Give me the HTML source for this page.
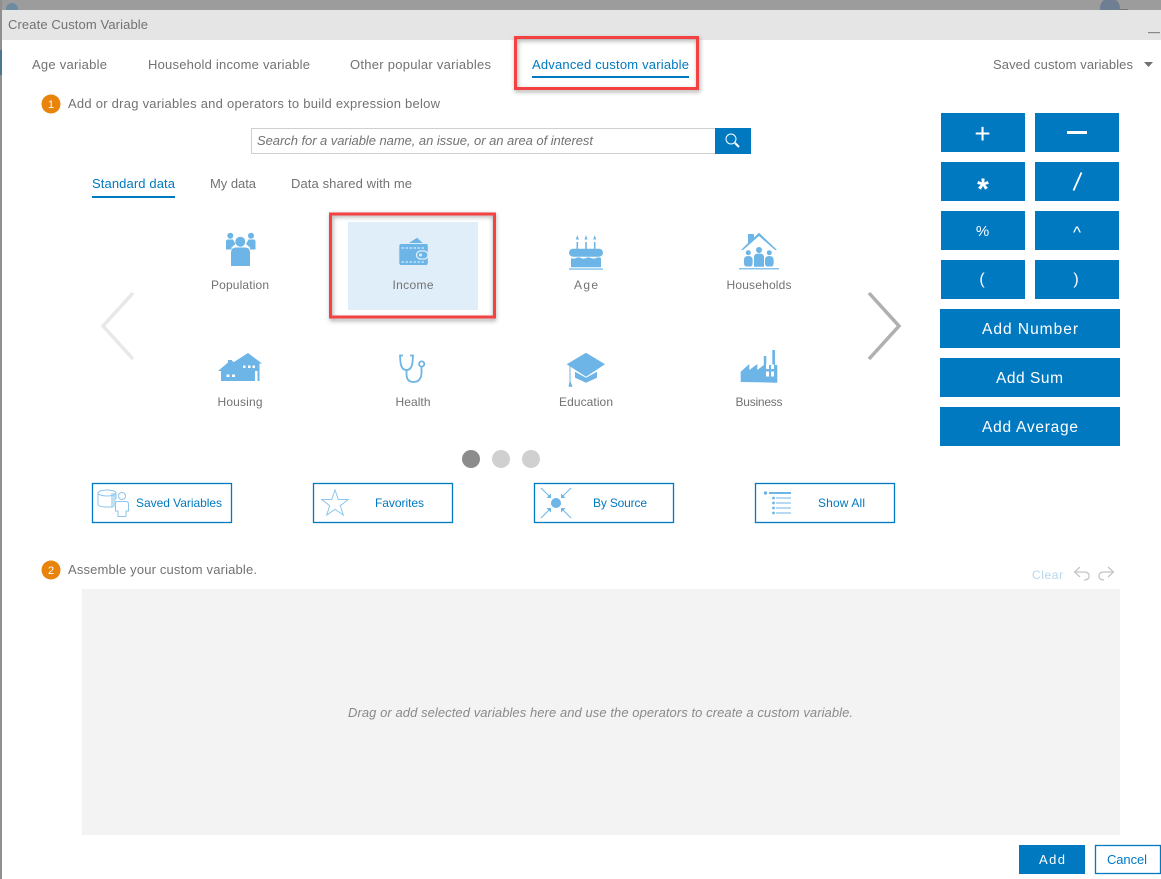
<!DOCTYPE html>
<html lang="en"><head><meta charset="utf-8"><title>Create Custom Variable</title>
<style>
html,body{margin:0;padding:0;width:1161px;height:879px;overflow:hidden;background:#fff}
svg{display:block;font-size:13px}
text{font-family:"Liberation Sans",sans-serif;fill:#727272}
text.b{fill:#0079c1}
text.w{fill:#fff}
.i{font-style:italic}
.ic{fill:#6cb5e6}
</style></head><body>
<svg width="1161" height="879" viewBox="0 0 1161 879" xmlns="http://www.w3.org/2000/svg">
<defs><filter id="sh" x="-10%" y="-20%" width="120%" height="140%"><feGaussianBlur stdDeviation="2"/></filter></defs>
<rect width="1161" height="879" fill="#fff"/>
<!-- backdrop -->
<rect width="1161" height="10" fill="#9c9c9c"/>
<rect x="0" y="0" width="2" height="879" fill="#8f8f8f"/>
<rect x="0" y="50" width="2" height="25" fill="#4c7690"/>
<circle cx="12" cy="9" r="6" fill="#6c8ba0"/>
<circle cx="1110" cy="8" r="10" fill="#6f7f93"/>
<rect x="1120" y="9" width="8" height="1" fill="#777"/>
<!-- header -->
<rect x="2" y="10" width="1159" height="30" fill="#e5e5e5"/>
<text x="8" y="29" textLength="140">Create Custom Variable</text>
<rect x="1148" y="32" width="12" height="1.2" fill="#888"/>
<!-- tabs -->
<text x="32" y="69" textLength="75">Age variable</text>
<text x="148" y="69" textLength="162">Household income variable</text>
<text x="350" y="69" textLength="141">Other popular variables</text>
<text x="532" y="69" textLength="157" class="b">Advanced custom variable</text>
<rect x="532" y="76" width="157" height="2" fill="#0079c1"/>
<text x="993" y="69" textLength="140">Saved custom variables</text>
<path d="M1144 62h9l-4.500 5z" fill="#707070"/>
<rect x="515.500" y="37.500" width="182" height="51" fill="none" stroke="#555" stroke-opacity=".55" stroke-width="3" filter="url(#sh)" transform="translate(1 2)"/>
<rect x="515.500" y="37.500" width="182" height="51" fill="none" stroke="#f44242" stroke-width="3"/>
<!-- step 1 -->
<circle cx="51" cy="104" r="9.500" fill="#e8830c"/>
<text x="51" y="108" text-anchor="middle" font-size="11" class="w">1</text>
<text x="68" y="108" textLength="372">Add or drag variables and operators to build expression below</text>
<!-- search -->
<rect x="251.500" y="128.500" width="464" height="25" fill="#fff" stroke="#cfcfcf"/>
<rect x="715" y="128" width="36" height="26" fill="#0079c1"/>
<circle cx="731" cy="139" r="5" fill="none" stroke="#fff" stroke-width="1"/>
<path d="M735 143l4 4" stroke="#fff" stroke-width="2" fill="none"/>
<text x="257" y="145" textLength="336" class="i">Search for a variable name, an issue, or an area of interest</text>
<!-- data tabs -->
<text x="92" y="188" textLength="83" class="b">Standard data</text>
<rect x="92" y="196" width="83" height="2" fill="#0079c1"/>
<text x="210" y="188" textLength="46">My data</text>
<text x="291" y="188" textLength="121">Data shared with me</text>
<!-- highlight -->
<rect x="330.500" y="213.500" width="163" height="104" fill="none" stroke="#555" stroke-opacity=".55" stroke-width="3" filter="url(#sh)" transform="translate(1 2)"/>
<rect x="348" y="222" width="130" height="88" fill="#e0eef9"/>
<rect x="330.500" y="214" width="164" height="103" fill="none" stroke="#f44242" stroke-width="3"/>
<!-- Population -->
<g class="ic">
<circle cx="240.300" cy="241.700" r="5"/><circle cx="230.300" cy="235.700" r="3"/><circle cx="251" cy="235.700" r="3"/>
<path d="M226 241.500q0-2 2-2h5q1 2 2.500 4.500l-4 3.500v2h-5.500zM255.500 241.500q0-2-2-2h-5q-1 2-2.500 4.500l4 3.500v2h5.500z"/>
<path d="M231 266v-13q0-5.500 5-5.500h9q5 0 5 5.500v13z"/>
</g>
<text x="240" y="289" text-anchor="middle" textLength="58" font-size="12">Population</text>
<!-- Income wallet -->
<g>
<path class="ic" d="M409 243l8-5.300 5.700 5.300z"/>
<path class="ic" d="M399.300 246q0-2 2-2h25q1.500 0 1.500 2v17q0 2-2 2h-24.500q-2 0-2-2z"/>
<path d="M401.500 248h24M401.500 262h24" stroke="#fff" stroke-width="1" stroke-dasharray="2.500 1.500" fill="none" opacity=".9"/>
<rect x="416.500" y="251" width="11.500" height="8" rx="4" fill="#6cb5e6" stroke="#e0eef9" stroke-width="1.300"/>
<circle cx="420.500" cy="255" r="1.500" fill="#e0eef9"/>
</g>
<text x="413" y="289" text-anchor="middle" textLength="41" font-size="12">Income</text>
<!-- Age cake -->
<g class="ic">
<path d="M576.500 242h1.600v7h-1.600zM585.200 242h1.600v7h-1.600zM593.900 242h1.600v7h-1.600z"/>
<path d="M577.300 235l1.500 4.500h-3zM586 235l1.500 4.500h-3zM594.700 235l1.500 4.500h-3z"/>
<rect x="569" y="248.700" width="34" height="8" rx="4"/>
<path d="M571 258q2.500 1.200 5 0t5 0 5 0 5 0 5 0 5 0V267.300h-30z"/>
<rect x="569" y="268.300" width="34" height="1.500" opacity=".8"/>
</g>
<text x="586" y="289" text-anchor="middle" textLength="24" font-size="12">Age</text>
<!-- Households -->
<g class="ic">
<path d="M748 234h6v3.500l5-4.800 18 17.300h-2l-16-14-16 14h-2l7-7z"/>
<circle cx="759" cy="250" r="3"/><circle cx="748.300" cy="252.700" r="2.500"/><circle cx="769.300" cy="252.700" r="2.500"/>
<path d="M754 257q0-3.500 5-3.500t5 3.500v9.700h-10zM744 260q0-4 4.300-4t4.300 4v3q0 3-2 3.500h-4.600q-2-.5-2-3.500zM765 260q0-4 4.300-4t4.300 4v3q0 3-2 3.500h-4.600q-2-.5-2-3.500z"/>
<rect x="739" y="268" width="40" height="1.500" opacity=".8"/>
</g>
<text x="759" y="289" text-anchor="middle" textLength="65" font-size="12">Households</text>
<!-- Housing -->
<path class="ic" d="M218 371l10-8.500v-2.500h4v1l2 1 14-9 14 10.500h-2.500V381H221v-10z"/>
<path d="M243 365.500h2.500v2.500H243zM248 365.500h2.500v2.500H248zM252.500 365.500h2.500v2.500h-2.500zM226.500 374.500h3v2.500h-3zM232 374.500h3v2.500h-3zM255 371h2.500v10H255z" fill="#fff"/>
<text x="240" y="406" text-anchor="middle" textLength="45" font-size="12">Housing</text>
<!-- Health -->
<g fill="none" stroke="#6cb5e6" stroke-width="1.800">
<path d="M403 355.500h-3l.5 7q1 7.500 6 7.500t6-7.500l.5-7h-3"/>
<path d="M406.500 370v4q0 8 7 8t8-8v-7"/>
<circle cx="421.700" cy="364" r="2.600"/>
</g>
<text x="413" y="406" text-anchor="middle" textLength="35" font-size="12">Health</text>
<!-- Education -->
<g class="ic">
<path d="M586 352.700l19 11.600-19 12.400-19.300-12.400z"/>
<path d="M575 371.700l11 6 11-6v6l-11 5-11-5z"/>
<rect x="569.500" y="365" width="1" height="17"/>
<path d="M569.500 381.500h1l2 5.200h-4z"/>
</g>
<text x="586" y="406" text-anchor="middle" textLength="54" font-size="12">Education</text>
<!-- Business -->
<path class="ic" d="M740.700 382v-10.300l8.600-7.700v6l8-6v6l6.500-5v-9h2.500v9h6v-15h2.700v15h2.300v17.700z"/>
<path d="M766 364.500h3v4.500h-3zM771 364.500h3v4.500h-3zM766 371.500h3v5h-3zM771 371.500h3v5h-3z" fill="#fff"/>
<text x="759" y="406" text-anchor="middle" textLength="47" font-size="12">Business</text>
<!-- arrows -->
<path d="M133 293l-30 33 30 33" fill="none" stroke="#e8e8e8" stroke-width="3.500"/>
<path d="M869 293l30 33-30 33" fill="none" stroke="#b0b0b0" stroke-width="3.500"/>
<!-- dots -->
<circle cx="471" cy="459" r="9" fill="#8c8c8c"/>
<circle cx="501" cy="459" r="9" fill="#d0d0d0"/>
<circle cx="531" cy="459" r="9" fill="#d0d0d0"/>
<!-- lower buttons -->
<g fill="#fff" stroke="#0079c1" stroke-width="1.300">
<rect x="92.500" y="483.500" width="139" height="39"/>
<rect x="313.500" y="483.500" width="139" height="39"/>
<rect x="534.500" y="483.500" width="139" height="39"/>
<rect x="755.500" y="483.500" width="139" height="39"/>
</g>
<path d="M111 493v14h5v-14z" fill="#bfe0f5"/>
<g fill="none" stroke="#8cc6ec" stroke-width="1">
<ellipse cx="107" cy="493" rx="9" ry="3"/>
<path d="M98 493v11q0 3 9 3h6M116 493v6"/>
<circle cx="122" cy="496" r="3.500"/>
<path d="M115.500 504q0-2.500 2.500-2.500h8q2.500 0 2.500 2.500v7h-2.500v5.500h-8V511h-2.500z"/>
<path d="M335 490l3.300 9.500h10l-8 6.200 3 9.300-8.300-5.700-8.300 5.700 3-9.300-8-6.200h10z"/>
</g>
<text x="136" y="507" textLength="86" font-size="12" class="b">Saved Variables</text>
<text x="375" y="507" textLength="49" font-size="12" class="b">Favorites</text>
<circle cx="556" cy="503" r="5" class="ic"/>
<g fill="none" stroke="#6cb5e6" stroke-width="1">
<path d="M541 488l9 9M571 488l-9 9M541 518l9-9M571 518l-9-9"/>
</g>
<g class="ic">
<path d="M551 498v-4.500l-4.500 4.500zM561 498v-4.500l4.500 4.500zM551 508v4.500l-4.500-4.500zM561 508v4.500l4.500-4.500z"/>
</g>
<text x="593" y="507" textLength="54" font-size="12" class="b">By Source</text>
<g class="ic">
<circle cx="765.500" cy="493" r="1.700"/><rect x="769" y="492" width="22" height="2"/>
<circle cx="773.500" cy="498" r="1.400"/><circle cx="773.500" cy="503" r="1.400"/><circle cx="773.500" cy="508" r="1.400"/><circle cx="773.500" cy="513" r="1.400"/>
<rect x="776" y="497.500" width="15" height="1"/><rect x="776" y="502.500" width="15" height="1"/><rect x="776" y="507.500" width="15" height="1"/><rect x="776" y="512.500" width="15" height="1"/>
</g>
<text x="818" y="507" textLength="47" font-size="12" class="b">Show All</text>
<!-- operators -->
<g fill="#0079c1">
<rect x="941" y="113" width="84" height="39"/><rect x="1035" y="113" width="84" height="39"/>
<rect x="941" y="162" width="84" height="39"/><rect x="1035" y="162" width="84" height="39"/>
<rect x="941" y="211" width="84" height="39"/><rect x="1035" y="211" width="84" height="39"/>
<rect x="941" y="260" width="84" height="39"/><rect x="1035" y="260" width="84" height="39"/>
<rect x="940" y="309" width="180" height="39"/><rect x="940" y="358" width="180" height="39"/><rect x="940" y="407" width="180" height="39"/>
</g>
<text x="982.500" y="143" text-anchor="middle" font-size="28" class="w">+</text>
<rect x="1067" y="131" width="20" height="3" fill="#fff"/>
<text x="983" y="199" text-anchor="middle" font-size="30" font-weight="bold" class="w">*</text>
<path d="M1073.500 190.500l8-18" stroke="#fff" stroke-width="1.800" fill="none"/>
<text x="982.500" y="236" text-anchor="middle" font-size="15" class="w">%</text>
<text x="1077" y="238" text-anchor="middle" font-size="17" class="w">^</text>
<text x="982" y="284" text-anchor="middle" font-size="16" class="w">(</text>
<text x="1076" y="284" text-anchor="middle" font-size="16" class="w">)</text>
<text x="982" y="334" textLength="96" font-size="15.500" class="w">Add Number</text>
<text x="996" y="383" textLength="67" font-size="15.500" class="w">Add Sum</text>
<text x="982" y="432" textLength="96" font-size="15.500" class="w">Add Average</text>
<!-- step 2 -->
<circle cx="51" cy="570" r="9.500" fill="#e8830c"/>
<text x="51" y="574" text-anchor="middle" font-size="11" class="w">2</text>
<text x="68" y="574" textLength="189">Assemble your custom variable.</text>
<text x="1032" y="579" textLength="31" font-size="12" style="fill:#b5d7ee">Clear</text>
<g fill="none" stroke="#c4c4c4" stroke-width="1.200">
<path d="M1080 567l-5.500 5 5.500 5M1075 572h9q5 0 5 4t-5 4"/>
<path d="M1108 567l5.500 5-5.500 5M1113 572h-9q-5 0-5 4t5 4"/>
</g>
<rect x="82" y="589" width="1038" height="246" fill="#f3f3f3"/>
<text x="348" y="717" textLength="505" class="i" style="fill:#8a8a8a">Drag or add selected variables here and use the operators to create a custom variable.</text>
<!-- footer -->
<rect x="1019" y="845" width="66" height="29" fill="#0079c1"/>
<text x="1039" y="864" textLength="26" class="w">Add</text>
<rect x="1095.500" y="845.500" width="65" height="28" fill="#fff" stroke="#0079c1" stroke-width="1.300"/>
<text x="1107" y="864" textLength="40" class="b">Cancel</text>
</svg>
</body></html>
